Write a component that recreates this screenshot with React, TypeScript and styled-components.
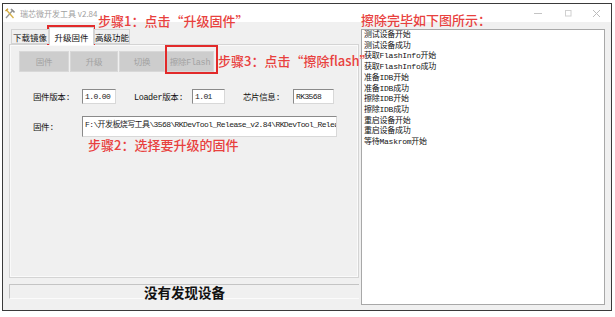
import React from "react";
import styled, { createGlobalStyle, css } from "styled-components";

const GlobalStyle = createGlobalStyle`
  html, body { margin: 0; padding: 0; background: #fff; }
  body { width: 615px; height: 317px; overflow: hidden; font-family: "Noto Sans CJK SC", sans-serif; }
`;

const simFont = css`
  font-family: "Liberation Mono", "Noto Sans CJK SC", monospace;
`;

const Page = styled.div`
  position: relative;
  width: 615px;
  height: 317px;
  padding: 3px 0 0 2px;
  box-sizing: border-box;
`;

const Window = styled.div`
  width: 610px;
  height: 308px;
  box-sizing: border-box;
  border: 1px solid #3a3a3a;
  display: flex;
  flex-direction: column;
  background: #f0f0f0;
`;

const TitleBar = styled.div`
  height: 18px;
  flex: none;
  background: #fff;
  display: flex;
  align-items: center;
  padding-left: 2px;
`;

const TitleText = styled.span`
  margin-left: 5px;
  font-size: 8px;
  color: #a0a0a0;
  font-family: "Noto Sans CJK SC", sans-serif;
  white-space: nowrap;
`;

const Controls = styled.div`
  margin-left: auto;
  display: flex;
  align-items: center;
  height: 100%;
`;

const ControlButton = styled.div`
  width: 29px;
  height: 100%;
  display: flex;
  align-items: center;
  justify-content: center;
`;

const Body = styled.div`
  flex: 1;
  display: flex;
  gap: 2px;
  padding: 4px 6px 5px 6px;
  min-height: 0;
`;

const LeftCol = styled.div`
  width: 350px;
  display: flex;
  flex-direction: column;
`;

const TabRow = styled.div`
  height: 18px;
  display: flex;
  align-items: flex-end;
  padding-left: 2px;
  position: relative;
  z-index: 1;
`;

const Tab = styled.div<{ $active?: boolean; $w: number }>`
  width: ${(p) => p.$w}px;
  box-sizing: border-box;
  height: ${(p) => (p.$active ? 18 : 15)}px;
  margin-bottom: ${(p) => (p.$active ? -1 : 0)}px;
  border: 1px solid #d4d4d4;
  border-bottom: ${(p) => (p.$active ? "none" : "1px solid #d4d4d4")};
  background: ${(p) => (p.$active ? "#ffffff" : "#f0f0f0")};
  font-size: 8.5px;
  color: #111;
  display: flex;
  align-items: center;
  justify-content: center;
  white-space: nowrap;
  font-family: "Noto Sans CJK SC", sans-serif;
`;

const Panel = styled.div`
  height: 234px;
  box-sizing: border-box;
  border: 1px solid #d4d4d4;
  box-shadow: inset 1px 1px 0 #fafafa, inset -1px -1px 0 #fafafa;
  padding: 6px 9px 0 9px;
  display: flex;
  flex-direction: column;
`;

const ButtonRow = styled.div`
  display: flex;
  gap: 1px;
`;

const ToolButton = styled.div<{ $w: number }>`
  width: ${(p) => p.$w}px;
  height: 21px;
  box-sizing: border-box;
  background: #cdcdcd;
  border: 1px solid #d8d8d8;
  color: #a2a2a2;
  font-size: 8.5px;
  display: flex;
  align-items: center;
  justify-content: center;
  white-space: nowrap;
  ${simFont};
  letter-spacing: -0.3px;
`;

const FieldRow = styled.div<{ $top: number; $h: number }>`
  display: flex;
  align-items: center;
  margin-top: ${(p) => p.$top}px;
  margin-left: 14px;
  height: ${(p) => p.$h}px;
`;

const Label = styled.div<{ $w: number; $gap?: number }>`
  width: ${(p) => p.$w}px;
  margin-left: ${(p) => p.$gap ?? 0}px;
  font-size: 8.5px;
  color: #111;
  white-space: nowrap;
  ${simFont};
  letter-spacing: -0.4px;
`;

const Input = styled.div<{ $w: number; $h: number }>`
  width: ${(p) => p.$w}px;
  height: ${(p) => p.$h}px;
  box-sizing: border-box;
  border: 1px solid #8a8a8a;
  border-right-color: #d8d8d8;
  border-bottom-color: #d8d8d8;
  background: #fff;
  font-size: 8px;
  color: #222;
  padding: 0 2px;
  display: flex;
  align-items: ${(p) => (p.$h > 16 ? "flex-start" : "center")};
  padding-top: ${(p) => (p.$h > 16 ? 1 : 0)}px;
  overflow: hidden;
  white-space: nowrap;
  ${simFont};
  letter-spacing: -0.6px;
`;

const StatusBox = styled.div`
  margin-top: 6px;
  height: 15px;
  box-sizing: border-box;
  border-top: 1px solid #c4c4c4;
  border-left: 1px solid #c4c4c4;
  border-bottom: 1px solid #fbfbfb;
  display: flex;
  align-items: center;
  justify-content: center;
  font-size: 13.5px;
  font-weight: 700;
  color: #111;
  font-family: "Noto Sans CJK SC", serif;
  line-height: 1;
  padding-top: 2px;
`;

const RightCol = styled.div`
  flex: 1;
  display: flex;
  flex-direction: column;
  padding-top: 3px;
`;

const LogBox = styled.div`
  flex: 1;
  background: #fff;
  border: 1px solid #a8a8a8;
  padding: 0 2px;
  box-sizing: border-box;
`;

const LogLine = styled.div`
  font-size: 8px;
  line-height: 10.7px;
  color: #111;
  white-space: nowrap;
  ${simFont};
  letter-spacing: -0.25px;
`;

const Note = styled.div<{ $x: number; $y: number }>`
  position: absolute;
  left: ${(p) => p.$x}px;
  top: ${(p) => p.$y}px;
  font-size: 13px;
  line-height: 15px;
  color: #e8413e;
  white-space: nowrap;
  font-family: "Noto Sans CJK SC", sans-serif;
  font-weight: 500;
`;

const RedBox = styled.div<{ $x: number; $y: number; $w: number; $h: number }>`
  position: absolute;
  left: ${(p) => p.$x}px;
  top: ${(p) => p.$y}px;
  width: ${(p) => p.$w}px;
  height: ${(p) => p.$h}px;
  box-sizing: border-box;
  border: 2px solid #e22a2a;
  pointer-events: none;
`;

const logs = [
  "测试设备开始",
  "测试设备成功",
  "获取FlashInfo开始",
  "获取FlashInfo成功",
  "准备IDB开始",
  "准备IDB成功",
  "擦除IDB开始",
  "擦除IDB成功",
  "重启设备开始",
  "重启设备成功",
  "等待Maskrom开始",
];

const AppIcon = () => (
  <svg width="10" height="11" viewBox="0 0 10 11">
    <path d="M1 10 L8 2" stroke="#9a9a9a" strokeWidth="1.4" />
    <path d="M6 1 L9.5 4.5" stroke="#8d8d8d" strokeWidth="1.6" />
    <path d="M1.5 2 L8.5 10" stroke="#d8b24a" strokeWidth="1.4" />
    <path d="M0.5 3 L3 0.8" stroke="#c79b2e" strokeWidth="1.4" />
  </svg>
);

export default function App() {
  return (
    <>
      <GlobalStyle />
      <Page>
        <Window>
          <TitleBar>
            <AppIcon />
            <TitleText>瑞芯微开发工具 v2.84</TitleText>
            <Controls>
              <ControlButton>
                <svg width="9" height="9" viewBox="0 0 9 9">
                  <path d="M0 4.5 H8" stroke="#c4c4c4" strokeWidth="1" />
                </svg>
              </ControlButton>
              <ControlButton>
                <svg width="8" height="8" viewBox="0 0 8 8">
                  <rect x="1.5" y="1.5" width="5.5" height="5.5" fill="none" stroke="#d0d0d0" strokeWidth="1" />
                </svg>
              </ControlButton>
              <ControlButton>
                <svg width="9" height="9" viewBox="0 0 9 9">
                  <path d="M1 1 L8 8 M8 1 L1 8" stroke="#bcbcbc" strokeWidth="1" />
                </svg>
              </ControlButton>
            </Controls>
          </TitleBar>
          <Body>
            <LeftCol>
              <TabRow>
                <Tab $w={38}>下载镜像</Tab>
                <Tab $w={45} $active>升级固件</Tab>
                <Tab $w={36}>高级功能</Tab>
              </TabRow>
              <Panel>
                <ButtonRow>
                  <ToolButton $w={50}>固件</ToolButton>
                  <ToolButton $w={48}>升级</ToolButton>
                  <ToolButton $w={46}>切换</ToolButton>
                  <ToolButton $w={48}>擦除Flash</ToolButton>
                </ButtonRow>
                <FieldRow $top={17} $h={15}>
                  <Label $w={49}>固件版本:</Label>
                  <Input $w={34} $h={15}>1.0.00</Input>
                  <Label $w={58} $gap={18}>Loader版本:</Label>
                  <Input $w={33} $h={15}>1.01</Input>
                  <Label $w={50} $gap={18}>芯片信息:</Label>
                  <Input $w={41} $h={15}>RK3568</Input>
                </FieldRow>
                <FieldRow $top={12} $h={21}>
                  <Label $w={49}>固件:</Label>
                  <Input $w={255} $h={21}>
                    F:\开发板烧写工具\3568\RKDevTool_Release_v2.84\RKDevTool_Release
                  </Input>
                </FieldRow>
              </Panel>
              <StatusBox>没有发现设备</StatusBox>
            </LeftCol>
            <RightCol>
              <LogBox>
                {logs.map((l, i) => (
                  <LogLine key={i}>{l}</LogLine>
                ))}
              </LogBox>
            </RightCol>
          </Body>
        </Window>
        <RedBox $x={47} $y={25} $w={48} $h={20} />
        <RedBox $x={165} $y={45} $w={53} $h={29} />
        <Note $x={98} $y={13}>步骤1：点击“升级固件”</Note>
        <Note $x={361} $y={12}>擦除完毕如下图所示：</Note>
        <Note $x={218} $y={53}>步骤3：点击“擦除flash”</Note>
        <Note $x={88} $y={137}>步骤2：选择要升级的固件</Note>
      </Page>
    </>
  );
}
